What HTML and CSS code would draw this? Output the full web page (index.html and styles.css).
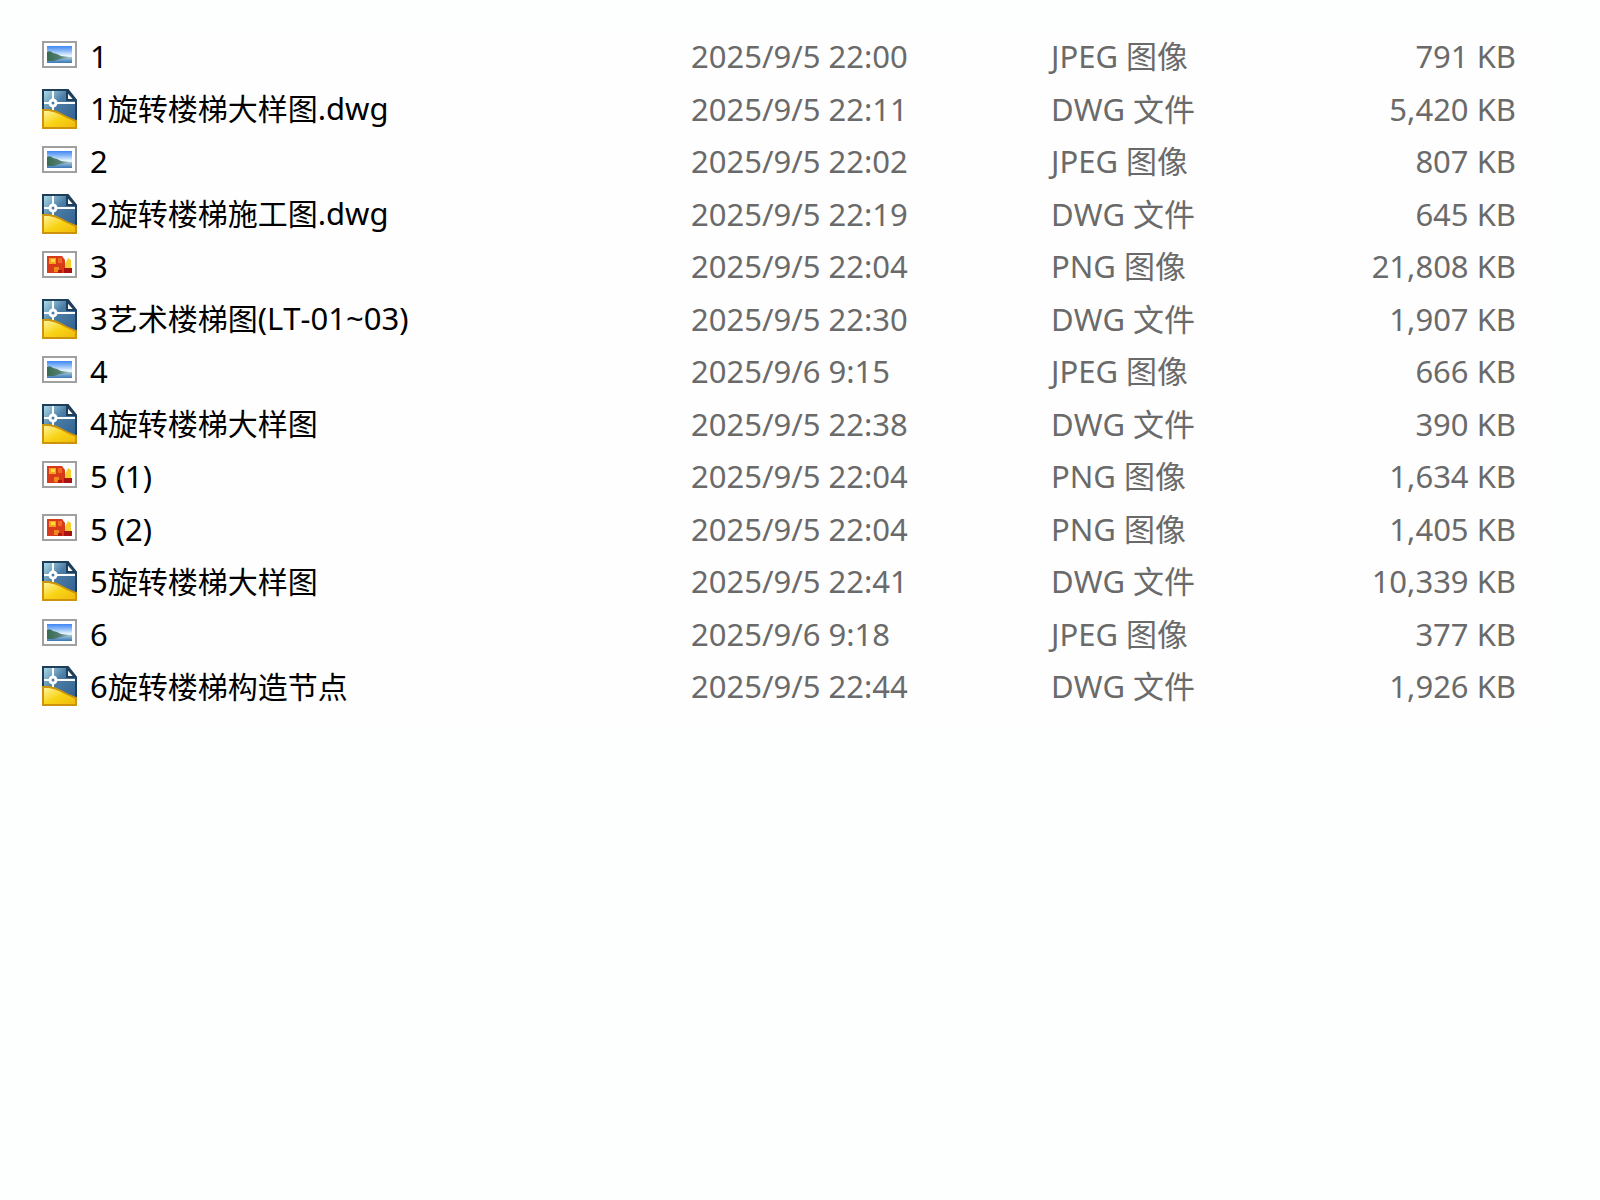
FILE: index.html
```
<!DOCTYPE html>
<html lang="zh-CN"><head><meta charset="utf-8"><title>文件列表</title><link rel="stylesheet" href="styles.css"></head>
<body>
<svg class="sprites" aria-hidden="true">
<defs>
<linearGradient id="sky" x1="0" y1="0" x2="0" y2="1"><stop offset="0" stop-color="#3f86f4"/><stop offset=".3" stop-color="#8fbdf8"/><stop offset=".55" stop-color="#e2f1fc"/><stop offset="1" stop-color="#e8f4fa"/></linearGradient>
<linearGradient id="sea" x1="0" y1="0" x2="0" y2="1"><stop offset="0" stop-color="#a9cbe0"/><stop offset="1" stop-color="#3a76b4"/></linearGradient>
<linearGradient id="hill" x1="0" y1="0" x2="1" y2="0"><stop offset="0" stop-color="#386a50"/><stop offset=".6" stop-color="#557f74"/><stop offset="1" stop-color="#a3c2c0"/></linearGradient>
<linearGradient id="blue" x1="0" y1="0" x2="1" y2="1"><stop offset="0" stop-color="#b4e0ea"/><stop offset=".4" stop-color="#4a7da6"/><stop offset="1" stop-color="#2f5c8c"/></linearGradient>
<linearGradient id="gold" x1="0" y1="0" x2="1" y2="1"><stop offset="0" stop-color="#fff6a8"/><stop offset=".5" stop-color="#f8d417"/><stop offset="1" stop-color="#f0b80a"/></linearGradient>
</defs>
<symbol id="jpeg" viewBox="0 0 35 40"><rect x="1" y="6" width="33" height="25" fill="#fff" stroke="#a0a0a0" stroke-width="2"/><rect x="5" y="10" width="25" height="17" fill="url(#sky)"/><path d="M5 21H30V27H5Z" fill="url(#sea)"/><path d="M5 16Q8 14 11 17L15 18L19 20L27 21V22L18 23L12 25H5Z" fill="url(#hill)"/></symbol>
<symbol id="png" viewBox="0 0 35 40"><rect x="1" y="6" width="33" height="25" fill="#fff" stroke="#a0a0a0" stroke-width="2"/><path d="M5 10H20L23 14V27H5Z" fill="#d93a1a"/><path d="M7 12H14V18H7Z" fill="#f5a21c"/><path d="M9 13H13V16H9Z" fill="#fbdc3a"/><path d="M16 12H20V17H16Z" fill="#ee6a22"/><path d="M23 18L26 12L29 14V22H23Z" fill="#f6cf2e"/><path d="M12 21H17V26H12Z" fill="#f08a20"/><path d="M22 22H30V27H22Z" fill="#a81210"/><path d="M16 24H20V27H16Z" fill="#b51a10"/></symbol>
<symbol id="dwg" viewBox="0 0 35 40"><path d="M1 1H26L34 11V39H1Z" fill="url(#blue)" stroke="#1e3f5c" stroke-width="2"/><path d="M25 2V11H33Z" fill="#fff" stroke="#1e3f5c" stroke-width="2"/><path d="M11 2V22M2 14H33" stroke="#fff" stroke-width="2"/><circle cx="11" cy="14" r="3" fill="#4a7da6" stroke="#fff" stroke-width="3"/><path d="M1 21H7Q14 22 19 25T34 32V39H1Z" fill="url(#gold)" stroke="#cc930c" stroke-width="2"/></symbol>
</svg>
<main class="panel">
<table class="files">
<colgroup><col><col class="col-date"><col class="col-type"><col class="col-size"></colgroup>
<tbody>
<tr><th scope="row"><div class="name"><svg class="icon"><use href="#jpeg"/></svg><span>1</span></div></th><td>2025/9/5 22:00</td><td>JPEG 图像</td><td class="size">791 KB</td></tr>
<tr><th scope="row"><div class="name"><svg class="icon"><use href="#dwg"/></svg><span>1<span class="han">旋转楼梯大样图</span>.dwg</span></div></th><td>2025/9/5 22:11</td><td>DWG 文件</td><td class="size">5,420 KB</td></tr>
<tr><th scope="row"><div class="name"><svg class="icon"><use href="#jpeg"/></svg><span>2</span></div></th><td>2025/9/5 22:02</td><td>JPEG 图像</td><td class="size">807 KB</td></tr>
<tr><th scope="row"><div class="name"><svg class="icon"><use href="#dwg"/></svg><span>2<span class="han">旋转楼梯施工图</span>.dwg</span></div></th><td>2025/9/5 22:19</td><td>DWG 文件</td><td class="size">645 KB</td></tr>
<tr><th scope="row"><div class="name"><svg class="icon"><use href="#png"/></svg><span>3</span></div></th><td>2025/9/5 22:04</td><td>PNG 图像</td><td class="size">21,808 KB</td></tr>
<tr><th scope="row"><div class="name"><svg class="icon"><use href="#dwg"/></svg><span>3<span class="han">艺术楼梯图</span>(LT-01~03)</span></div></th><td>2025/9/5 22:30</td><td>DWG 文件</td><td class="size">1,907 KB</td></tr>
<tr><th scope="row"><div class="name"><svg class="icon"><use href="#jpeg"/></svg><span>4</span></div></th><td>2025/9/6 9:15</td><td>JPEG 图像</td><td class="size">666 KB</td></tr>
<tr><th scope="row"><div class="name"><svg class="icon"><use href="#dwg"/></svg><span>4<span class="han">旋转楼梯大样图</span></span></div></th><td>2025/9/5 22:38</td><td>DWG 文件</td><td class="size">390 KB</td></tr>
<tr><th scope="row"><div class="name"><svg class="icon"><use href="#png"/></svg><span>5 (1)</span></div></th><td>2025/9/5 22:04</td><td>PNG 图像</td><td class="size">1,634 KB</td></tr>
<tr><th scope="row"><div class="name"><svg class="icon"><use href="#png"/></svg><span>5 (2)</span></div></th><td>2025/9/5 22:04</td><td>PNG 图像</td><td class="size">1,405 KB</td></tr>
<tr><th scope="row"><div class="name"><svg class="icon"><use href="#dwg"/></svg><span>5<span class="han">旋转楼梯大样图</span></span></div></th><td>2025/9/5 22:41</td><td>DWG 文件</td><td class="size">10,339 KB</td></tr>
<tr><th scope="row"><div class="name"><svg class="icon"><use href="#jpeg"/></svg><span>6</span></div></th><td>2025/9/6 9:18</td><td>JPEG 图像</td><td class="size">377 KB</td></tr>
<tr><th scope="row"><div class="name"><svg class="icon"><use href="#dwg"/></svg><span>6<span class="han">旋转楼梯构造节点</span></span></div></th><td>2025/9/5 22:44</td><td>DWG 文件</td><td class="size">1,926 KB</td></tr>
</tbody>
</table>
</main>
</body></html>
```
FILE: styles.css
```
body {
  margin: 0;
  background: #fdfffe;
  color: #6a6a6a;
  font: 31px/40px "Noto Sans", "Noto Sans CJK SC", sans-serif;
  font-kerning: none;
}

.sprites {
  position: absolute;
  width: 0;
  height: 0;
}

.panel {
  margin: 30px 44px 0 30px;
  padding-bottom: 20px;
  background: #fefefe;
}

.files {
  width: 100%;
  table-layout: fixed;
  border-collapse: collapse;
}

.col-date { width: 360px; }
.col-type { width: 240px; }
.col-size { width: 265px; }

tr { height: 52px; }
tr:nth-child(even) { height: 53px; }

th,
td {
  padding: 0;
  text-align: left;
  vertical-align: middle;
  font-weight: 400;
  white-space: nowrap;
}

th { color: #000; }

.name {
  display: flex;
  align-items: center;
  gap: 13px;
  padding-left: 12px;
}

.icon {
  flex: none;
  width: 35px;
  height: 40px;
}

.han { font-size: 30px; }

.files .size {
  padding-right: 40px;
  text-align: right;
}
```
